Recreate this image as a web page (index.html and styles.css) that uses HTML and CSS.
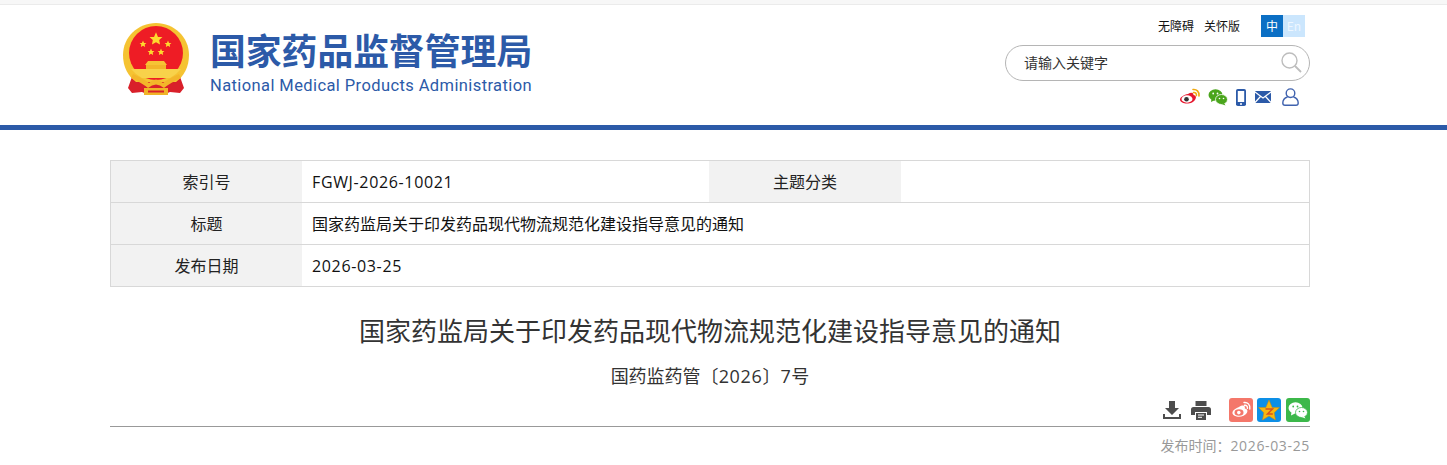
FILE: index.html
```html
<!DOCTYPE html>
<html lang="zh-CN">
<head>
    <meta charset="UTF-8">
    <title>国家药监局关于印发药品现代物流规范化建设指导意见的通知</title>
    <link rel="stylesheet" href="styles.css">
</head>
<body>

<svg class="defs" width="0" height="0">
    <defs>
        <polygon id="star" points="0,-10 2.9,-3.1 9.5,-3.1 4.7,1.5 5.9,8.1 0,4.6 -5.9,8.1 -4.7,1.5 -9.5,-3.1 -2.9,-3.1"/>
    </defs>
</svg>

<div class="topline"></div>

<header class="header">
    <div class="wrap header-inner">
        <div class="logo">
            <svg class="emblem" width="68" height="74" viewBox="0 0 68 74">
                <path d="M11 52 L6 66 L10 71 L20 70 L27 73 L41 73 L48 70 L58 71 L62 66 L57 52 Z" fill="#d9202a"/>
                <path d="M34 1 C52 1 67 15 67 33 C67 45 62 54 54 60 L14 60 C6 54 1 45 1 33 C1 15 16 1 34 1 Z" fill="#f5c332"/>
                <circle cx="34" cy="31" r="27" fill="#ee1c25"/>
                <use href="#star" transform="translate(34,17) scale(.68)" fill="#ffd92e"/>
                <use href="#star" transform="translate(21,22) scale(.36)" fill="#ffd92e"/>
                <use href="#star" transform="translate(46,22) scale(.36)" fill="#ffd92e"/>
                <use href="#star" transform="translate(29,30) scale(.36)" fill="#ffd92e"/>
                <use href="#star" transform="translate(39,30) scale(.36)" fill="#ffd92e"/>
                <path d="M26 39 H42 L45 43 H23 Z" fill="#f6c335"/>
                <rect x="24" y="43" width="20" height="5" fill="#f2b52a"/>
                <path d="M9 47 H59 Q54 53 48 56 H20 Q14 53 9 47 Z" fill="#f8d24a"/>
                <path d="M11 52 Q22 57 27 61 Q34 54 41 61 Q46 57 57 52 L59 56 Q48 61 42 66 Q34 59 26 66 Q20 61 9 56 Z" fill="#f3b62a"/>
                <rect x="22" y="66" width="24" height="7" fill="#f0b428"/>
                <rect x="26" y="68.500" width="16" height="2" fill="#d9202a"/>
            </svg>
            <div class="logo-text">
                <div class="logo-cn">国家药品监督管理局</div>
                <div class="logo-en">National Medical Products Administration</div>
            </div>
        </div>

        <div class="tools">
            <div class="links">
                <a>无障碍</a>
                <a>关怀版</a>
                <div class="lang">
                    <span class="lang-on">中</span>
                    <span class="lang-off">En</span>
                </div>
            </div>
            <div class="search">
                <span>请输入关键字</span>
                <svg width="22" height="22" viewBox="0 0 22 22" fill="none" stroke="#bdbdbd">
                    <circle cx="9.500" cy="9.500" r="7.500" stroke-width="1.400"/>
                    <path d="M15 15 L21 21" stroke-width="1.800"/>
                </svg>
            </div>
            <div class="follow">
                <svg class="ic-weibo" width="22" height="18" viewBox="0 0 22 18">
                    <path d="M9 6C12 4 14.500 4.500 14.500 7C17 7.500 17.500 9 16.500 11C15 14.500 10.500 16 6.500 15.500C3 15 1 13.500 1 11.500C1 9.500 5 6.500 9 6Z" fill="#e6162d"/>
                    <ellipse cx="8" cy="11" rx="5.500" ry="3.700" fill="#fff"/>
                    <circle cx="7.500" cy="11.200" r="2.300" fill="#333"/>
                    <path d="M14 1.500C17.500 1 20.500 3.500 20 8M14.500 4.500C16.300 4.200 17.800 5.500 17.400 7.500" fill="none" stroke="#f0a80f" stroke-width="1.600" stroke-linecap="round"/>
                </svg>
                <svg class="ic-wechat" width="20" height="17" viewBox="0 0 20 17">
                    <ellipse cx="7.500" cy="6" rx="7" ry="5.700" fill="#4aa51c"/>
                    <path d="M3.500 9.500 L3 13 L7 11 Z" fill="#4aa51c"/>
                    <ellipse cx="13.500" cy="10.500" rx="6" ry="5" fill="#4aa51c" stroke="#fff" stroke-width=".8"/>
                    <path d="M16 14 L17.500 16.500 L13.500 15 Z" fill="#4aa51c"/>
                    <circle cx="5.200" cy="4.500" r=".9" fill="#fff"/>
                    <circle cx="9.500" cy="4.500" r=".9" fill="#fff"/>
                    <circle cx="11.500" cy="9.500" r=".8" fill="#fff"/>
                    <circle cx="15.500" cy="9.500" r=".8" fill="#fff"/>
                </svg>
                <svg class="ic-phone" width="10" height="17" viewBox="0 0 10 17">
                    <rect x="0" y="0" width="10" height="17" rx="1.800" fill="#2c5aa8"/>
                    <rect x="1.800" y="2" width="6.400" height="11" fill="#fff"/>
                    <circle cx="5" cy="15" r="1" fill="#fff"/>
                </svg>
                <svg class="ic-mail" width="16" height="12" viewBox="0 0 16 12">
                    <rect width="16" height="12" rx="1" fill="#2c5aa8"/>
                    <path d="M0 1 L8 7 L16 1 M0 11.500 L5.500 5.500 M16 11.500 L10.500 5.500" fill="none" stroke="#fff" stroke-width="1.200"/>
                </svg>
                <svg class="ic-user" width="17" height="18" viewBox="0 0 17 18" fill="none" stroke="#3f62ae" stroke-width="1.400">
                    <circle cx="8.500" cy="5.200" r="4.300"/>
                    <path d="M5.500 9C2.500 10 .8 12.500 .8 15C.8 16.500 1.500 17.200 3 17.200H14C15.500 17.200 16.200 16.500 16.200 15C16.200 12.500 14.500 10 11.500 9"/>
                </svg>
            </div>
        </div>
    </div>
</header>

<main class="wrap">
    <table class="info">
        <tr>
            <th>索引号</th>
            <td class="narrow"><span class="num">FGWJ-2026-10021</span></td>
            <th>主题分类</th>
            <td></td>
        </tr>
        <tr>
            <th>标题</th>
            <td colspan="3">国家药监局关于印发药品现代物流规范化建设指导意见的通知</td>
        </tr>
        <tr>
            <th>发布日期</th>
            <td colspan="3"><span class="num">2026-03-25</span></td>
        </tr>
    </table>

    <h1 class="title">国家药监局关于印发药品现代物流规范化建设指导意见的通知</h1>
    <p class="doc-no">国药监药管〔<span class="num">2026</span>〕<span class="num">7</span>号</p>

    <div class="share">
        <svg class="ic-down" width="18" height="18" viewBox="0 0 18 18" fill="#4d4d4d">
            <path d="M6 0 H12 V7 H16 L9 14 L2 7 H6 Z"/>
            <path d="M0 13 H2 V16 H16 V13 H18 V18 H0 Z"/>
        </svg>
        <svg class="ic-print" width="20" height="19" viewBox="0 0 20 19" fill="#4d4d4d">
            <path d="M4.500 0 H15.500 V5 H4.500 Z"/>
            <path d="M2.500 6 H17.500 Q20 6 20 8.500 V14 H16 V11 H4 V14 H0 V8.500 Q0 6 2.500 6 Z"/>
            <path d="M5 12 H15 V19 H5 Z"/>
            <path d="M7 14 H13 M7 16.300 H11" stroke="#fff" stroke-width="1"/>
        </svg>
        <div class="share-btns">
            <svg width="24" height="24" viewBox="0 0 24 24">
                <rect width="24" height="24" rx="3" fill="#f4776a"/>
                <path d="M10 9C14 6.500 16.500 7.500 15.800 10.500C18.500 11 19 13 17.800 15C16 18 11.500 19.500 7.500 18.500C4.500 17.800 3 16 3.500 14C4 12 7 10 10 9Z" fill="#fff"/>
                <ellipse cx="10" cy="14.500" rx="4.500" ry="3.200" fill="#f4776a"/>
                <circle cx="9.800" cy="14.600" r="1.800" fill="#fff"/>
                <path d="M15 4.500C18.500 4 21.500 6.500 20.800 11M15.500 7.300C17.300 7 18.800 8.300 18.400 10.300" fill="none" stroke="#fff" stroke-width="1.400" stroke-linecap="round"/>
            </svg>
            <svg width="24" height="24" viewBox="0 0 24 24">
                <rect width="24" height="24" rx="3" fill="#0d8fe6"/>
                <use href="#star" transform="translate(12,13) scale(1.100)" fill="#f7b80f" stroke="#c98a10" stroke-width=".5"/>
                <path d="M8.500 11 H15.500 L10.500 16 H15.800" fill="none" stroke="#d9501e" stroke-width="1.500"/>
            </svg>
            <svg width="24" height="24" viewBox="0 0 24 24">
                <rect width="24" height="24" rx="3" fill="#3cb84a"/>
                <ellipse cx="9.500" cy="10" rx="7" ry="5.800" fill="#fff"/>
                <path d="M5.500 14 L5 17.500 L9 15.500 Z" fill="#fff"/>
                <ellipse cx="15.500" cy="14.500" rx="6" ry="5" fill="#fff" stroke="#3cb84a" stroke-width=".8"/>
                <path d="M18 18 L19.500 20.500 L15.500 19 Z" fill="#fff"/>
                <circle cx="7.200" cy="8.500" r=".9" fill="#3cb84a"/>
                <circle cx="11.500" cy="8.500" r=".9" fill="#3cb84a"/>
                <circle cx="13.500" cy="13.500" r=".8" fill="#3cb84a"/>
                <circle cx="17.500" cy="13.500" r=".8" fill="#3cb84a"/>
            </svg>
        </div>
    </div>

    <div class="pub-time">发布时间：<span class="num">2026-03-25</span></div>
</main>

</body>
</html>
```

FILE: styles.css
```css
html, body {
    height: 465px;
    overflow: hidden;
}
body {
    margin: 0;
    background-color: #fff;
    color: #333;
    font-family: "Noto Sans CJK SC", sans-serif;
}
.defs {
    display: block;
    height: 0;
}
.wrap {
    width: 1200px;
    margin-left: 110px;
}
.num {
    font-family: "Open Sans", "Noto Sans CJK SC", sans-serif;
    letter-spacing: .65px;
}
.topline {
    height: 4px;
    background-color: #f7f7f7;
    border-bottom: 1px solid #ebebeb;
}
.header {
    height: 120px;
    border-bottom: 5px solid #2c5aa8;
}
.header-inner {
    display: flex;
    justify-content: space-between;
}
.logo {
    display: flex;
    align-items: flex-start;
    padding: 17px 0 0 12px;
}
.emblem {
    display: block;
}
.logo-text {
    margin-left: 20px;
    color: #2c5aa8;
}
.logo-cn {
    margin-top: 4px;
    height: 46px;
    font: bold 35.800px/46px "Noto Sans CJK SC", sans-serif;
    white-space: nowrap;
}
.logo-en {
    margin-top: 3px;
    font: 16.500px/22px "Roboto", sans-serif;
    letter-spacing: .4px;
    white-space: nowrap;
}
.tools {
    width: 305px;
}
.links {
    display: flex;
    align-items: center;
    justify-content: flex-end;
    height: 22px;
    margin-top: 10px;
    padding-right: 5px;
    font: 12px/20px "Noto Sans CJK SC", sans-serif;
    color: #111;
}
.links a {
    margin-right: 10px;
}
.lang {
    display: flex;
    margin-left: 11px;
    line-height: 22px;
    text-align: center;
}
.lang span {
    width: 22px;
    height: 22px;
}
.lang-on {
    background-color: #0b6fc4;
    color: #fff;
}
.lang-off {
    background-color: #cbe6fd;
    color: #eef7ff;
}
.search {
    display: flex;
    align-items: center;
    justify-content: space-between;
    box-sizing: border-box;
    height: 36px;
    margin-top: 8px;
    padding: 0 7px 2px 18px;
    border: 1px solid #b5b5b5;
    border-radius: 18px;
    font: 14px/32px "Noto Sans CJK SC", sans-serif;
    color: #333;
}
.follow {
    display: flex;
    align-items: center;
    justify-content: flex-end;
    height: 18px;
    margin-top: 7px;
    padding-right: 11px;
}
.follow svg {
    display: block;
}
.ic-wechat {
    margin-left: 7px;
}
.ic-phone {
    margin-left: 8px;
}
.ic-mail {
    margin-left: 9px;
}
.ic-user {
    margin-left: 11px;
}
.info {
    width: 1200px;
    margin-top: 30px;
    border-collapse: collapse;
    table-layout: fixed;
    font: 16px/20px "Noto Sans CJK SC", sans-serif;
}
.info th, .info td {
    height: 39px;
    padding: 0 0 2px;
    border-top: 1px solid #d8d8d8;
    border-bottom: 1px solid #d8d8d8;
    font-weight: normal;
}
.info th {
    width: 192px;
    background-color: #f2f2f2;
    color: #222;
    text-align: center;
}
.info td {
    padding-left: 10px;
    color: #111;
}
.info .num {
    vertical-align: -1px;
}
.info tr > :first-child {
    width: 191px;
    border-left: 1px solid #d8d8d8;
}
.info tr > :last-child {
    border-right: 1px solid #d8d8d8;
}
.info .narrow {
    width: 397px;
}
.title {
    margin: 25px 0 0;
    font: normal 26px/36px "Noto Sans CJK SC", sans-serif;
    color: #333;
    text-align: center;
}
.doc-no {
    margin: 15px 0 0;
    font: 18px/24px "Noto Sans CJK SC", sans-serif;
    color: #333;
    text-align: center;
}
.share {
    display: flex;
    align-items: center;
    justify-content: flex-end;
    height: 24px;
    margin-top: 10px;
    padding-bottom: 4px;
    border-bottom: 1px solid #999;
}
.ic-print {
    margin-left: 10px;
}
.share-btns {
    display: flex;
    gap: 5px;
    margin-left: 18px;
}
.share-btns svg {
    display: block;
}
.share-btns svg:first-child {
    margin-right: -1px;
}
.pub-time {
    margin-top: 8px;
    font: 14px/20px "Noto Sans CJK SC", sans-serif;
    color: #999;
    text-align: right;
}
```
